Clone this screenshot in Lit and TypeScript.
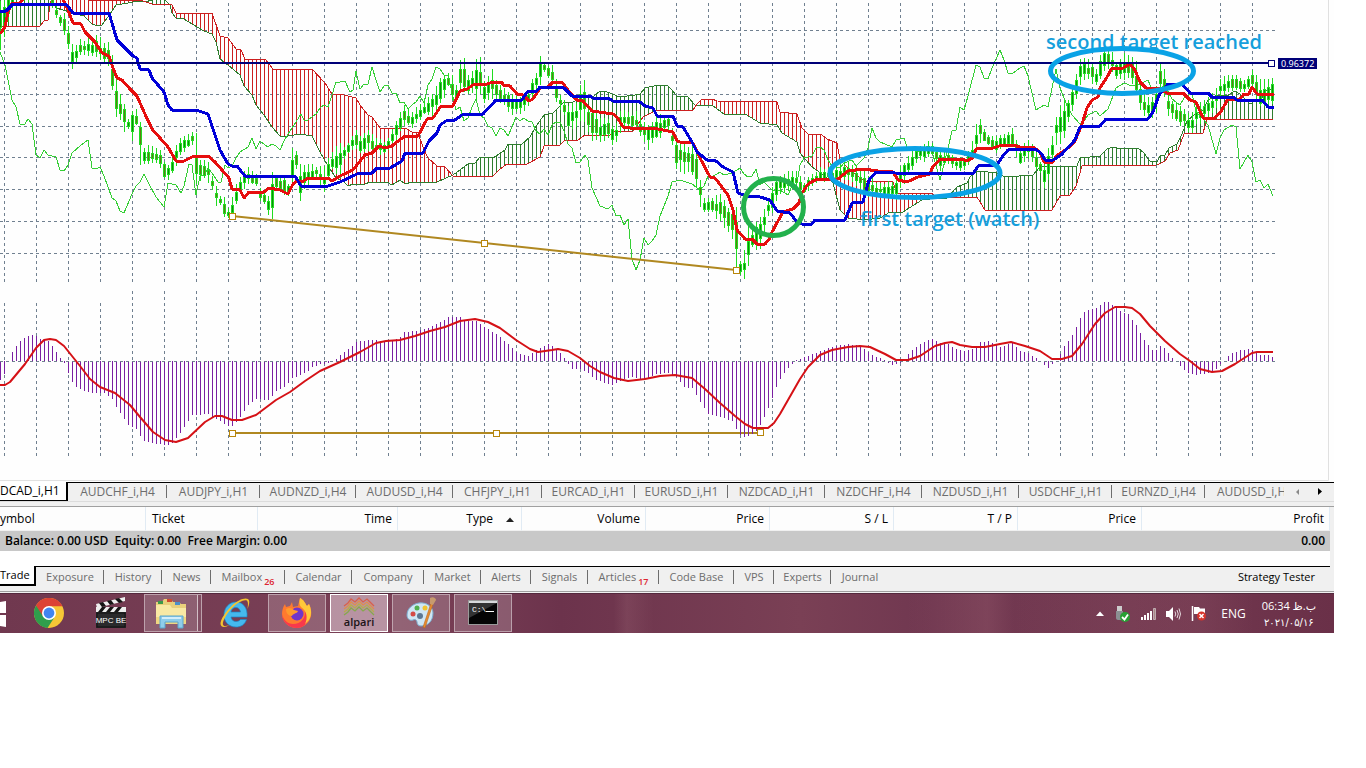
import { LitElement, html, svg, css } from "lit";
import { customElement } from "lit/decorators.js";

type Pt = number[];

const parse = (s: string): Pt[] =>
  s.trim().split(/\s+/).map((p) => p.split(",").map(Number));

const at = (pts: Pt[], x: number, k = 1): number => {
  if (x <= pts[0][0]) return pts[0][k];
  for (let i = 1; i < pts.length; i++) {
    const a = pts[i - 1];
    const b = pts[i];
    if (x <= b[0]) return a[k] + ((b[k] - a[k]) * (x - a[0])) / (b[0] - a[0] || 1);
  }
  return pts[pts.length - 1][k];
};

const TENKAN = `0,34 5,27 8,12 12,3 20,3 25,-3 62,-3 68,10 73,23 81,24 85,32 95,42 102,53 109,56 113,68 117,78 122,80 130,89 137,96 144,112 152,129 160,138 168,147 176,161 184,161 192,157 208,156 215,162 222,170 229,178 232,189 240,190 244,198 249,192 264,192 269,188 280,190 288,194 293,184 297,181 302,182 308,178 328,178 332,181 340,176
353,170 365,155 372,153 379,146 385,148 392,146 397,142 405,136 418,136 427,119 433,118 441,106 453,106 460,91 467,89 473,85 487,84 493,82 502,82 503,85 510,86 517,94 523,95 529,101 533,99 540,88 548,87 553,82 562,82 570,93 577,100 583,101 592,111 613,114 617,117 623,127 630,128 653,128 673,132 677,141
680,142 693,143 700,158 710,177 715,178 722,187 728,195 733,210 737,230 745,239 752,239 757,244 765,244 770,238 772,232 783,212 793,209 799,203 802,193 808,184 817,179 838,179 848,171 863,169 878,171 893,172 898,180 907,182 918,177 930,174 932,168 940,159 963,159 966,161 973,158 976,149 993,148 1002,145 1013,145
1020,147 1033,147 1040,152 1044,162 1053,162 1056,156 1068,148 1075,141 1082,124 1087,108 1092,100 1098,97 1100,88 1107,77 1112,68 1123,68 1130,64 1135,70 1140,82 1146,88 1158,88 1167,93 1183,93 1190,100 1196,102 1203,118 1213,119 1220,113 1228,99 1240,99 1244,94 1249,94 1252,87 1257,94 1274,94`;

const KIJUN = `0,11 6,11 13,4 66,4 73,13 109,13 117,40 133,56 137,58 140,69 149,70 152,78 164,92 168,105 172,110 196,110 208,114 220,150 228,164 232,166 237,166 245,176 295,176 301,186 328,186 340,182 357,174 372,173 377,168 390,168 402,161 405,153 423,153 429,141 437,133 440,125 446,121 455,120 462,115 483,114 496,100 522,100 527,92 537,91 540,87 564,88 572,96 590,96 593,98 608,98 613,101 640,102 645,106 653,108 657,116 673,116 677,126
683,127 692,142 697,152 707,160 716,161 723,167 733,172 738,193 747,196 760,197 770,200 777,211 790,213 797,222 802,224 812,224 815,220 845,220 852,203 863,202 869,180 876,172 895,173 973,174 978,166 997,165 1002,157 1008,150 1035,149 1041,153 1045,160 1053,160 1061,155 1075,140 1080,127 1100,126 1106,119 1148,119 1153,112 1159,95 1168,84 1183,85 1190,93 1208,93 1212,97 1233,97 1237,100 1262,100 1268,107 1274,107`;

const CHIKOU = `0,52 5,65 12,100 16,107 20,124 25,124 28,119 32,124 36,155 40,158 44,150 48,155 56,157 60,170 64,171 68,165 72,153 80,146 88,140 92,168 96,169 100,167 104,176 112,198 116,201 120,211 124,213 132,194 136,186 140,182 144,174 148,182 156,197 164,207 168,183 176,185 181,193 184,186 189,164 192,165 196,195 200,176 204,175 208,168 212,173 218,182 221,182 225,165 228,168 232,166 236,158 240,152 248,147 252,138 256,149 260,141 268,147 272,144 276,146 280,150 284,141 288,134 296,122 301,114 304,120 308,120 316,114 320,108 324,105 328,107 332,95 336,82
340,82 345,81 350,92 353,90 356,71 360,89 364,84 368,84 372,67 376,80 380,92 384,86 388,85 392,93 396,93 400,103 404,102 408,109 412,105 416,102 420,96 424,103 428,85 432,79 436,67 440,69 444,75 448,76 452,92 456,110 460,107 464,121 468,118 472,107 476,99 480,115 484,118 488,126 492,128 496,136 500,128 504,130 508,136 512,127 516,117 520,121 524,118 528,121 532,122 536,131 540,134 544,129 548,135 552,125 556,122 560,122 564,131 568,144 572,148 576,163 580,162 585,155 588,160 592,188 600,206 608,209 612,205 616,216 620,215 624,225 628,219 632,259 636,270 640,260 644,238 648,245 652,241 656,235 660,216 668,196 672,182
680,180 692,184 700,190 704,186 708,176 712,177 720,172 724,175 732,173 740,168 744,174 748,177 752,176 756,169 760,185 764,182 772,190 780,190 788,195 792,186 796,189 800,165 804,158 808,157 812,156 816,148 820,147 824,150 828,160 832,166 840,168 844,163 852,160 856,166 864,158 868,148 872,128 876,138 880,142 892,147 896,140 904,138 908,150 912,150 920,152 928,146 932,152 936,165 940,180 948,148 952,131 956,130 960,107 964,110 968,96 976,65 980,67 984,78 988,79 992,68 1000,50 1004,60 1008,73 1012,74 1020,68
1024,66 1028,76 1036,110 1044,105 1048,107 1052,88 1056,69 1060,88 1068,108 1072,115 1080,124 1084,121 1088,115 1096,111 1100,116 1108,109 1116,88 1124,83 1132,86 1140,84 1148,80 1152,90 1160,90 1164,85 1172,99 1180,105 1184,98 1192,93 1196,112 1204,120 1208,125 1216,154 1220,138 1224,130 1232,125 1236,127 1240,169 1248,155 1252,162 1256,182 1260,180 1264,188 1268,184 1273,196`;

const SPAN_A = `0,-3 50,-3 56,8 84,16 92,24 98,26 102,25 110,14 116,5 128,3 138,1 145,2 155,-1 165,0 170,5 172,13 176,18 184,19 192,24 204,31 212,34 216,42 220,59 228,65 240,75 244,86 252,95 256,105 264,115 272,127 280,136 288,136 300,134 312,136 320,152 328,166 336,178 344,182 348,186 353,184 365,184 370,182 387,182 392,185 400,180 405,184 412,182 437,182 453,175 468,164 475,163 480,157 493,158 505,150 508,144 522,144 530,137 535,128 544,115 553,113 563,103 573,102 582,98 593,97 600,91 607,92 620,97 635,95 640,94 645,88 658,85 667,85 670,88 677,96
688,97 695,105 713,106 724,114 745,114 760,123 777,125 782,133 797,142 800,153 812,167 825,176 833,183 840,210 848,218 865,220 880,218 890,212 903,212 917,203 922,200 930,199 947,198 957,187 967,183 970,177 978,171 997,173 1005,177 1033,175 1040,167 1065,166 1069,167 1077,166 1080,158 1100,156 1107,149 1113,147 1120,149 1138,148 1144,153 1150,161 1157,162 1160,156 1165,155 1169,148 1177,144 1182,134 1187,121 1195,114 1203,110 1208,100 1215,96 1228,95 1235,91 1240,94 1250,104 1255,101 1262,98 1264,92 1273,88`;

const SPAN_B = `0,26 40,26 44,21 48,20 50,5 52,-2 84,-2 88,0 140,0 152,4 172,5 176,13 212,13 220,36 228,38 236,49 241,50 245,59 265,59 273,69 312,69 325,83 332,94 340,94 356,98 360,105 368,115 372,117 380,128 407,129 412,132 418,133 423,147 428,158 437,166 445,167 453,176 493,176 500,169 507,164 527,164 540,157 544,146 560,145 564,141 578,140 585,135 610,135 613,132 633,131 643,117 657,110 680,110
693,110 697,104 702,99 712,99 717,101 777,102 780,112 797,114 802,128 808,134 822,135 827,139 837,143 840,160 848,168 852,172 865,181 893,182 897,193 933,194 935,197 977,197 985,210 1052,210 1060,196 1070,195 1076,186 1082,166 1157,165 1165,161 1170,153 1178,150 1184,134 1203,133 1207,119 1273,119`;

/* x, centre, half range */
const PRICE = `0,20,22 4,14,20 8,6,14 16,-8,8 48,-6,4 52,0,6 56,12,6 60,20,5 64,25,9 68,38,10 72,58,10 76,54,8 80,47,6 88,48,8 96,46,8 104,54,12 108,55,10 112,75,15 116,95,20 120,106,10 124,115,12 128,124,5 132,123,14 136,118,8 140,140,20 144,156,6 148,155,8 156,156,6 160,160,8 164,170,8 168,172,6 172,166,8 176,155,8 180,147,8 188,142,6 192,138,6 196,160,22 200,170,8 208,172,8 212,183,8 216,195,8 220,200,4 224,208,8 228,213,5 232,207,8 236,195,10 240,185,8 248,176,8 256,180,5 260,195,5 264,198,6 268,205,8 272,195,18 276,182,6 284,185,8 288,190,6 292,168,15 296,160,8 300,185,16 304,178,12 308,175,8 316,172,6 324,180,10 328,170,10 332,162,8 340,160,14 344,152,6 348,148,5 356,140,8 360,146,8 368,140,8 376,146,6 384,148,6 388,144,6 392,136,8 396,130,8 400,122,8 404,115,8 412,120,7 416,116,8 424,108,7 428,108,8 436,100,10 440,90,14 448,80,6 452,88,10 456,93,6 460,77,14 464,78,15 468,85,8 476,78,16 480,76,14 484,92,10 492,84,12 496,90,8 504,97,8 512,105,10 520,104,8 528,98,8 532,88,8 536,82,8 540,70,12 544,68,4 552,75,8 556,92,10 560,102,6 564,108,6 568,118,10 576,115,10 580,104,14 584,100,16 588,118,14 592,122,16 600,130,12 608,128,8 614,138,8 620,120,10 628,120,6 636,122,8 644,132,8 648,136,12 652,132,10 660,126,10 668,122,6 672,138,8 676,155,14 680,156,14 688,158,12 696,168,16 700,192,12 704,205,8 712,205,7 720,208,12 728,218,10 732,222,12 736,240,28 740,268,6 744,265,12 748,245,18 752,240,8 760,230,15 764,220,12 768,208,8 772,200,12 776,188,12 784,182,8 796,180,8 804,188,6 812,180,6 820,175,6 832,174,5 850,170,8 860,180,10 870,188,8 885,191,5 896,188,10 900,178,10 908,165,10 916,155,6 924,152,8 932,150,6 940,160,8 948,158,6 956,164,6 964,164,5 972,152,8 976,138,11 980,130,10 988,140,4 996,145,7 1004,140,6 1012,138,8 1020,156,8 1028,148,8 1036,160,8 1040,168,6 1044,175,10 1048,165,14 1052,148,14 1056,130,12 1064,120,16 1068,110,10 1072,98,10 1076,85,12 1080,70,12 1088,70,10 1096,76,8 1104,60,12 1110,60,8 1116,70,8 1130,66,12 1138,85,15 1142,104,12 1150,108,8 1156,100,12 1160,76,12 1164,85,14 1168,105,10 1176,113,8 1184,118,8 1190,125,8 1196,115,8 1208,108,8 1216,98,8 1220,88,8 1232,83,8 1244,85,5 1252,80,8 1260,95,12 1272,92,12`;

const MACD = `0,380 4,374 8,362 12,352 16,346 20,341 24,338 28,336 32,335 36,336 40,339 44,340 48,341 52,346 56,352 60,358 64,363 68,373 72,382 76,387 84,391 92,393 104,393 112,399 116,407 120,413 128,425 136,429 140,436 144,441 156,444 168,445 172,443 176,438 184,427 192,415 208,414 216,419 220,421 228,426 232,426 236,422 244,411 248,405 256,399 268,400 276,391 284,387 292,378 300,375 308,371 312,367 320,364 328,363 332,361 336,359 340,355 348,349 352,346 356,342 368,340 392,341 400,337 404,332 416,331 428,328 440,322 448,317 460,317 464,321 476,321 484,327 496,334 508,344 516,352 520,354 528,356 536,350 540,348 548,344 552,346 560,353 564,358 568,364 572,369 580,369 588,373 596,380 612,385 616,383 624,379 632,377 644,380 652,376 656,374 668,373 676,377 684,387 692,388 700,402 704,408 708,414 720,417 732,421 736,429 742,438 748,436 756,431 760,425 764,417 768,408 772,398 776,387 780,379 784,373 788,368 796,360 808,356 820,351 828,348 840,345 848,344 856,345 864,349 872,355 880,358 884,360 892,365 900,363 904,359 908,354 912,350 920,344 928,340 932,339 940,343 948,344 956,349 964,351 972,349 980,342 988,341 996,345 1000,347 1012,343 1020,351 1028,353 1036,358 1044,365 1048,368 1052,364 1056,361 1060,354 1064,346 1072,335 1076,327 1080,318 1084,312 1088,310 1096,308 1104,302 1108,302 1112,305 1120,311 1128,314 1136,325 1144,340 1152,350 1156,350 1160,346 1164,348 1172,358 1180,366 1188,373 1196,375 1208,373 1216,369 1220,364 1224,361 1228,356 1232,353 1240,350 1248,349 1252,350 1260,355 1268,355 1272,357`;

const SIGNAL = `0,385 5,385 10,382 25,364 36,348 44,340 50,339 56,340 64,346 72,356 80,366 90,379 100,387 115,393 130,405 140,417 153,432 165,440 176,442 188,438 205,422 215,416 222,416 232,420 242,420 256,415 276,400 290,392 305,381 320,371 340,362 360,352 376,343 386,341 400,340 415,336 430,331 445,327 460,321 475,319 488,322 500,328 516,340 530,349 538,352 552,350 558,349 568,351 580,358 590,366 600,372 614,378 628,381 645,379 660,376 675,375 692,378 705,389 720,403 735,416 745,424 753,428 768,428 774,423 780,414 788,400 800,379 808,367 820,355 832,350 848,347 860,346 870,347 885,354 896,360 908,360 920,356 935,346 945,343 952,342 960,345 972,347 985,347 1000,344 1011,342 1025,346 1040,351 1052,359 1062,359 1072,356 1082,344 1095,324 1105,313 1115,307 1125,307 1132,308 1140,314 1150,326 1165,341 1180,354 1190,361 1200,369 1212,372 1222,371 1235,364 1252,353 1257,352 1273,352`;

const gridPath = (): string => {
  let d = "";
  for (let x = 4; x < 1270; x += 32) {
    d += `M${x}.5 3V283M${x}.5 ${x < 110 ? 303 : 291}V457`;
  }
  for (const y of [30, 94, 126, 157, 189, 221, 253]) d += `M0 ${y}.5H1275`;
  return d;
};

const cloudPaths = (): { up: string; down: string } => {
  const a = parse(SPAN_A);
  const b = parse(SPAN_B);
  let up = "";
  let down = "";
  for (let x = 0; x <= 1272; x += 4) {
    const ya = Math.round(at(a, x));
    const yb = Math.round(at(b, x));
    if (Math.abs(ya - yb) < 2) continue;
    if (ya < yb) up += `M${x}.5 ${ya}V${yb}`;
    else down += `M${x}.5 ${yb}V${ya}`;
  }
  return { up, down };
};

const candlePaths = () => {
  const p = parse(PRICE);
  let wick = "";
  let body = "";
  let bull = "";
  let bear = "";
  let seed = 7;
  const rnd = () => {
    seed = (seed * 16807) % 2147483647;
    return seed / 2147483647;
  };
  for (let x = 0; x <= 1272; x += 4) {
    const c = at(p, x);
    const h = at(p, x, 2);
    const hi = Math.round(c - h * (0.85 + rnd() * 0.55));
    const lo = Math.round(c + h * (0.85 + rnd() * 0.55));
    const t = Math.round(c - h * (0.2 + rnd() * 0.5));
    const b = Math.round(c + h * (0.2 + rnd() * 0.5)) + 1;
    const falling = at(p, x + 4) > c;
    wick += `M${x}.5 ${hi}V${lo}`;
    body += `M${x}.5 ${t}V${b}`;
    if (falling) bear += `M${x}.5 ${t + 1}V${b - 1}`;
    else bull += `M${x}.5 ${t + 1}V${b - 1}`;
  }
  return { wick, body, bull, bear };
};

const macdPath = (): string => {
  const m = parse(MACD);
  let d = "";
  for (let x = 0; x <= 1272; x += 4) {
    d += `M${x}.5 361V${Math.round(at(m, x))}`;
  }
  return d;
};

const handle = (x: number, y: number, color = "#b8860b") =>
  svg`<rect x=${x - 2.5} y=${y - 2.5} width="6" height="6" fill="#fff" stroke=${color} stroke-width="1"></rect>`;

@customElement("price-chart")
export class PriceChart extends LitElement {
  static styles = css`
    :host { display: block; background: #fefefe; }
    .plot { display: block; width: 100%; height: auto; }
    .note { font: 600 20px "Open Sans", "Noto Sans", sans-serif; fill: #159fdc; }
    .tag { font: 9px "Noto Sans", sans-serif; fill: #fff; }
  `;
  render() {
    const cloud = cloudPaths();
    const candle = candlePaths();
    return html`
      <svg class="plot" viewBox="0 0 1334 482" role="img" aria-label="Price chart">
        <defs><clipPath id="cap"><rect x="1030" y="28" width="260" height="22"></rect></clipPath></defs>
        <g fill="none">
          <path d=${gridPath()} stroke="#708090" stroke-dasharray="3 3" shape-rendering="crispEdges"></path>
          <g shape-rendering="crispEdges">
            <path d=${cloud.up} stroke="#2e7d2e"></path>
            <path d=${cloud.down} stroke="#cc1f1f"></path>
            <polyline points=${SPAN_A} stroke="#2e7d2e"></polyline>
            <polyline points=${SPAN_B} stroke="#cc1f1f"></polyline>
            <polyline points=${CHIKOU} stroke="#35cf35"></polyline>
            <path d=${candle.wick} stroke="#1fdc1f"></path>
            <path d=${candle.body} stroke="#1fdc1f" stroke-width="3"></path>
            <path d=${candle.bull} stroke="#0a8f0a"></path>
            <path d=${candle.bear} stroke="#5f7a14"></path>
            <polyline points=${TENKAN} stroke="#e60e0e" stroke-width="3" stroke-linejoin="round"></polyline>
            <polyline points=${KIJUN} stroke="#0000d8" stroke-width="3" stroke-linejoin="round"></polyline>
          </g>
          <path d="M0 63H1269" stroke="#000078" stroke-width="2"></path>
          <path d="M232 216L736 270M232 433H760" stroke="#b08820" stroke-width="2"></path>
          <path d=${macdPath()} stroke="#7a1fa2" shape-rendering="crispEdges"></path>
          <path d="M0 361.5H1278" stroke="#708090" stroke-dasharray="3 3" shape-rendering="crispEdges"></path>
          <polyline points=${SIGNAL} stroke="#d51116" stroke-width="2" stroke-linejoin="round"></polyline>
        </g>
        ${handle(232, 216)}${handle(484, 243)}${handle(736, 270)}
        ${handle(232, 433)}${handle(496, 433)}${handle(760, 432)}
        ${handle(1271, 63, "#000078")}
        <rect x="1278" y="58" width="39" height="11" fill="#000078"></rect>
        <text class="tag" x="1281" y="67">0.96372</text>
        <text class="note" x="1046" y="49" clip-path="url(#cap)">second target reached</text>
        <text class="note" x="860" y="226">first target (watch)</text>
        <g fill="none" stroke-width="5">
          <ellipse cx="773.5" cy="207" rx="30" ry="28.5" stroke="#22b14c"></ellipse>
          <ellipse cx="915" cy="173" rx="85" ry="24.5" stroke="#0aa2e6"></ellipse>
          <ellipse cx="1122" cy="71" rx="71.5" ry="22.5" stroke="#0aa2e6"></ellipse>
        </g>
        <path d="M1328.5 0V480.5H0" fill="none" stroke="#e0e0e0"></path>
      </svg>
    `;
  }
}

@customElement("symbol-tabs")
export class SymbolTabs extends LitElement {
  static styles = css`
    :host { display: block; background: #f0f0f0; border-bottom: 1px solid #a0a0a0; padding-bottom: 4px; }
    .strip {
      display: grid; height: 19px; border-bottom: 1px solid #dcdcdc;
      grid-template-columns: 68fr 99fr 93fr 96fr 97fr 89fr 93fr 93fr 97fr 97fr 97fr 93fr 93fr 79fr 50fr;
    }
    .tab {
      border: 0; background: none; margin: 0; padding: 0; min-width: 0; overflow: hidden; white-space: nowrap;
      font: 12px/18px "Open Sans", "Noto Sans", sans-serif; color: #6d6d6d; border-top: 1px solid #000;
      display: flex; align-items: center; justify-content: center;
    }
    .tab.on { border: 0; border-right: 2px solid #000; border-bottom: 1px solid #000; background: #fff; color: #000; justify-content: flex-start; }
    .tab.split { background: linear-gradient(#6d6d6d, #6d6d6d) no-repeat right 2px / 1px 13px; }
    .tab.cut { justify-content: flex-start; padding-left: 12px; }
    .nav { border-top: 1px solid #000; display: flex; align-items: center; gap: 15px; padding-left: 10px; }
    .arrow { border: 0; background: none; padding: 0; width: 7px; height: 10px; display: flex; }
  `;
  private names = ["AUDCHF_i,H4", "AUDJPY_i,H1", "AUDNZD_i,H4", "AUDUSD_i,H4", "CHFJPY_i,H1", "EURCAD_i,H1", "EURUSD_i,H1", "NZDCAD_i,H1", "NZDCHF_i,H4", "NZDUSD_i,H1", "USDCHF_i,H1", "EURNZD_i,H4"];
  render() {
    return html`<div class="strip">
      <button class="tab on">DCAD_i,H1</button>
      ${this.names.map((n) => html`<button class="tab split">${n}</button>`)}
      <button class="tab cut">AUDUSD_i,H4</button>
      <div class="nav">
        <button class="arrow" aria-label="Scroll left"><svg width="7" height="10" viewBox="0 0 7 10"><path d="M5 2v6L2 5z" fill="#8a8a8a"></path></svg></button>
        <button class="arrow" aria-label="Scroll right"><svg width="7" height="10" viewBox="0 0 7 10"><path d="M2 1v7l4-3.5z" fill="#000"></path></svg></button>
      </div>
    </div>`;
  }
}

@customElement("trade-terminal")
export class TradeTerminal extends LitElement {
  static styles = css`
    :host { display: block; background: #f0f0f0; padding-right: 4px; border-bottom: 1px solid #a0a0a0; font: 11px/18px "Open Sans", "Noto Sans", sans-serif; }
    .orders { width: 100%; border-collapse: separate; border-spacing: 0; table-layout: fixed; background: #fdfdfd; font-size: 12px; }
    .orders th { height: 24px; box-sizing: border-box; padding: 0 5px; font-weight: 400; text-align: right; border-right: 1px solid #e1ebf4; border-bottom: 1px solid #f0f0f0; white-space: nowrap; }
    .orders th.left { text-align: left; padding-left: 6px; }
    .orders th.edge { padding-left: 0; }
    .orders th.type { padding-right: 6px; }
    .orders td { height: 20px; padding: 0 5px; background: #c8c8c8; font-weight: 600; white-space: pre; }
    .orders td.sum { text-align: right; }
    .sort { margin-left: 12px; vertical-align: 1px; }
    .rest { height: 15px; background: #fff; }
    .tabs {
      display: grid; height: 25px;
      grid-template-columns: 36fr 68fr 58fr 49fr 74fr 67fr 72fr 57fr 50fr 57fr 71fr 75fr 40fr 57fr 58fr 441fr;
    }
    .tab {
      border: 0; border-top: 1px solid #000; background: none; margin: 0; padding: 0 0 4px; min-width: 0; white-space: nowrap;
      font: inherit; color: #6d6d6d; display: flex; align-items: center; justify-content: center;
    }
    .tab.split { background: linear-gradient(#6d6d6d, #6d6d6d) no-repeat right 3px / 1px 14px; }
    .tab.on { border-top: 0; border-right: 2px solid #000; border-bottom: 2px solid #000; background: #fff; color: #000; height: 20px; box-sizing: border-box; padding: 0; justify-content: flex-start; }
    .tab.tester { color: #000; justify-content: flex-end; padding-right: 15px; }
    .count { font-size: 9px; line-height: 10px; font-weight: 600; color: #dd2430; margin-left: 2px; align-self: flex-end; }
  `;
  private tabs: [string, string?][] = [["Exposure"], ["History"], ["News"], ["Mailbox", "26"], ["Calendar"], ["Company"], ["Market"], ["Alerts"], ["Signals"], ["Articles", "17"], ["Code Base"], ["VPS"], ["Experts"]];
  render() {
    return html`
      <table class="orders">
        <colgroup>
          ${[146, 112, 140, 124, 124, 124, 124, 124, 124, 188].map((w) => html`<col style="width:${(w / 13.3).toFixed(3)}%" />`)}
        </colgroup>
        <thead>
          <tr>
            <th class="left edge">ymbol</th><th class="left">Ticket</th><th>Time</th>
            <th class="type">Type<svg class="sort" width="10" height="5" viewBox="0 0 10 5"><path d="M1 5L5 0.5 9 5z" fill="#222"></path></svg></th>
            <th>Volume</th><th>Price</th><th>S / L</th><th>T / P</th><th>Price</th><th>Profit</th>
          </tr>
        </thead>
        <tbody>
          <tr><td colspan="9">Balance: 0.00 USD  Equity: 0.00  Free Margin: 0.00</td><td class="sum">0.00</td></tr>
        </tbody>
      </table>
      <div class="rest"></div>
      <div class="tabs">
        <button class="tab on">Trade</button>
        ${this.tabs.map(([n, c]) => html`<button class="tab split">${n}${c ? html`<span class="count">${c}</span>` : ""}</button>`)}
        <button class="tab">Journal</button>
        <button class="tab tester">Strategy Tester</button>
      </div>
    `;
  }
}

const chrome = svg`<svg width="30" height="30" viewBox="0 0 30 30">
  <circle cx="15" cy="15" r="15" fill="#f6c736"></circle>
  <path d="M15 15L2 7.5A15 15 0 0 0 13.5 30L20 20z" fill="#2f9e4c"></path>
  <path d="M2 7.5A15 15 0 0 1 28.500 8.3H15L8.8 18z" fill="#dc4335"></path>
  <circle cx="15" cy="15" r="7" fill="#fff"></circle><circle cx="15" cy="15" r="5.4" fill="#4285f0"></circle></svg>`;

const clapper = svg`<svg width="32" height="32" viewBox="0 0 32 32">
  <path d="M1 7L30 0v4L2 11z" fill="#eee"></path><path d="M4 6l4-1 3 4-4 1zM12 4l4-1 3 4-4 1zM20 2l4-1 4 4-4 1z" fill="#151515"></path>
  <rect x="1" y="10" width="30" height="5" fill="#eee"></rect><path d="M3 15l4-5h4l-4 5zM11 15l4-5h4l-4 5zM19 15l4-5h4l-4 5z" fill="#151515"></path>
  <rect x="1" y="15" width="30" height="16" fill="#2a2a2c"></rect><rect x="2" y="16" width="28" height="14" fill="none" stroke="#111"></rect>
  <text x="16" y="26" text-anchor="middle" font-family="Liberation Sans, sans-serif" font-size="8" fill="#fff">MPC BE</text></svg>`;

const folder = svg`<svg width="34" height="32" viewBox="0 0 34 32">
  <path d="M2 5h6l2-3h7l2 3h6l2 2h5v19H2z" fill="#e9d07c"></path><path d="M4 4h5v3H4z" fill="#3c9a4a"></path><path d="M13 2h5v3h-5z" fill="#cf4a2e"></path><path d="M21 5h5v3h-5z" fill="#4c8fc9"></path>
  <path d="M2 8h14l2 3h14v16H2z" fill="#f8e9a4"></path><path d="M2 20h30v7H2z" fill="#efd681"></path>
  <path d="M6 19h23v12h-5v-6H11v6H6z" fill="#8fcdea" stroke="#5aa6cd"></path><path d="M8 20h19v2H8z" fill="#d2eefb"></path></svg>`;

const explorer = svg`<svg width="32" height="32" viewBox="0 0 32 32">
  <path d="M28 20H12c.5 3 2.500 4.500 5 4.500 2 0 3.500-.8 4.500-2h6C26 27.500 22 30 17 30 10 30 5 25 5 18S10 5 17 5C24 5 29 11 28 20zM12 15h9.500c-.5-3-2.300-4.500-4.700-4.500S12.500 12 12 15z" fill="#45b9ee" stroke="#1c85c6" stroke-width=".7"></path>
  <path d="M28.500 12c2-5 2.500-8.500.5-10-3-2-10.500 1-16 6.500S1 22.500 1.500 27c.5 4 5 3.500 9 1-4 1.500-6.300 1.500-6.600-.7C3.400 24 8 16 13.500 10.500S25.500 2 27.800 3.600c1.400 1 1.400 4.500.7 8.400z" fill="#f4c430"></path></svg>`;

const firefox = svg`<svg width="32" height="32" viewBox="0 0 32 32">
  <path d="M4 7l1 3 4-1 2-4 1 5 5-1 2-8c4 2 5 5 7 8l2-2c3 6 3 12 0 17-3 4-7 7-12 7C8 31 1 25 1 17c0-4 1-7 3-10z" fill="#ff7a2f"></path>
  <path d="M1 17c1 6 6 10 11 10 8 0 13-6 12-14l5 4c-1 8-6 14-13 14C8 31 1 25 1 17z" fill="#f8394c"></path>
  <path d="M19 1c4 2 5 5 7 8l2-2c4 8 2 16-4 20 3-6 2-13-4-17-2-2-2-5-1-9z" fill="#ffc83a"></path>
  <circle cx="16" cy="17" r="6.5" fill="#7135c9"></circle><path d="M5 12c3-2 6-1 8 1l4 1c-1 3-5 2-6 5-4 0-6-3-6-7z" fill="#ff9a2d"></path></svg>`;

const alpari = svg`<svg width="40" height="34" viewBox="0 0 40 34">
  <g fill="none" stroke-width="1.3"><path d="M5 10l4-3 3-4 4 3 4-4 4 4 4-3 3 3 4 4" stroke="#d8614c"></path><path d="M5 13l4-3 3-4 4 3 4-4 4 4 4-3 3 3 4 4" stroke="#e08e4c"></path><path d="M5 16l4-3 3-4 4 3 4-4 4 4 4-3 3 3 4 4" stroke="#b6ae48"></path><path d="M5 19l4-3 3-4 4 3 4-4 4 4 4-3 3 3 4 4" stroke="#86a84e"></path></g>
  <text x="20" y="30" text-anchor="middle" font-family="Open Sans, sans-serif" font-weight="600" font-size="11" fill="#1a1216">alpari</text></svg>`;

const paint = svg`<svg width="32" height="32" viewBox="0 0 32 32">
  <path d="M14 6c8-1 14 4 14 10 0 8-5 13-12 13-3 0-4-2-4-4s-2-3-4-2c-3 1-6-1-6-5C2 12 7 7 14 6z" fill="#cfe6f4" stroke="#7aaed0"></path>
  <circle cx="8" cy="17" r="2.5" fill="#d44a46"></circle><circle cx="12" cy="11" r="2.5" fill="#52b050"></circle><circle cx="20" cy="11" r="2.5" fill="#f0c330"></circle><circle cx="15" cy="19" r="3" fill="#5c7894"></circle>
  <path d="M26 6l2 1-8 24-2-1z" fill="#e68a2e" stroke="#b5651d" stroke-width=".5"></path><path d="M25 1c3-2 6 0 6 2l-3 5-3-1z" fill="#c79a6e"></path></svg>`;

const consoleIcon = svg`<svg width="30" height="26" viewBox="0 0 30 26">
  <rect x=".5" y=".5" width="29" height="24" fill="#050505" stroke="#9a9a9a"></rect><rect x="1" y="1" width="28" height="2" fill="#d8dadc"></rect>
  <path d="M1 3h28L1 18z" fill="#333"></path><text x="4" y="12" font-family="Liberation Mono, monospace" font-size="8" fill="#fff">C:\\</text><path d="M18 11.5h8" stroke="#fff"></path></svg>`;

@customElement("task-bar")
export class TaskBar extends LitElement {
  static styles = css`
    :host {
      display: flex; align-items: stretch; height: 40px; box-sizing: border-box; border-top: 1px solid #54283d;
      font: 12px/18px "Open Sans", "Noto Sans", "DejaVu Sans", sans-serif; color: #fff;
      background:
        linear-gradient(90deg, transparent 0 46%, rgba(150, 95, 112, 0.3) 47%, transparent 49%, transparent 68%, rgba(150, 90, 108, 0.35) 74%, transparent 76%, rgba(150, 90, 108, 0.2) 90%, transparent 94%),
        linear-gradient(90deg, #70384f, #7b4157 30%, #6c334c 42%, #7a4055 60%, #703750 70%, #743a51 85%, #6a3048);
    }
    .app, .start { border: 0; background: none; margin: 0; padding: 0; display: flex; align-items: center; justify-content: center; }
    .start { width: 20px; justify-content: flex-start; }
    .apps { display: flex; gap: 4px; padding-bottom: 1px; flex: 1; }
    .app { width: 58px; box-sizing: border-box; border: 1px solid transparent; }
    .app.open { background: rgba(255, 255, 255, 0.18); border-color: rgba(255, 255, 255, 0.42); }
    .app.active { background: rgba(235, 215, 225, 0.55); border-color: #fff; }
    .app.stack { box-shadow: inset -4px 0 0 -1px rgba(120, 65, 88, 0.9), inset -5px 0 0 -1px rgba(255, 255, 255, 0.6); padding-right: 4px; }
    .tray { display: flex; align-items: center; gap: 10px; }
    .lang { margin-left: 5px; }
    .clock { text-align: center; font-size: 11px; line-height: 17px; margin: 0 18px 0 6px; }
    .day { font-family: "DejaVu Sans", sans-serif; font-size: 10px; }
  `;
  render() {
    return html`
      <button class="start" aria-label="Start"><svg width="6" height="28" viewBox="0 0 6 28"><path d="M0 2l6-1v12H0zM0 15h6v12l-6-1z" fill="#fff"></path></svg></button>
      <div class="apps">
        <button class="app" aria-label="Chrome">${chrome}</button>
        <button class="app" aria-label="Media player">${clapper}</button>
        <button class="app open stack" aria-label="Files">${folder}</button>
        <button class="app" aria-label="Internet Explorer">${explorer}</button>
        <button class="app open" aria-label="Firefox">${firefox}</button>
        <button class="app active" aria-label="Alpari terminal">${alpari}</button>
        <button class="app open" aria-label="Paint">${paint}</button>
        <button class="app open" aria-label="Command prompt">${consoleIcon}</button>
      </div>
      <div class="tray">
        <svg width="8" height="5" viewBox="0 0 8 5"><path d="M0 5l4-4.5L8 5z" fill="#fff"></path></svg>
        <svg width="17" height="18" viewBox="0 0 17 18"><path d="M3 1h5v5H3z" fill="#ccc"></path><path d="M2 6h7v9H4c-1 0-2-1-2-2z" fill="#8b8f92"></path><circle cx="11" cy="12" r="5" fill="#27a034"></circle><path d="M8 12l2.500 2.500L14 9.500" fill="none" stroke="#fff" stroke-width="1.8"></path></svg>
        <svg width="15" height="12" viewBox="0 0 15 12"><path d="M0 9h2v3H0zM3 7h2v5H3zM6 5h2v7H6zM9 3h2v9H9z" fill="#fff"></path><path d="M12.500.5h2v11h-2z" fill="#a88" stroke="#ddd" stroke-width=".6"></path></svg>
        <svg width="15" height="14" viewBox="0 0 15 14"><path d="M0 4h3l4-4v14l-4-4H0z" fill="#fff"></path><path d="M9 4.500q1.500 2.500 0 5M11 3q2.500 4 0 8M13 1.500q3 5.500 0 11" fill="none" stroke="#fff" stroke-width=".8"></path></svg>
        <svg width="15" height="15" viewBox="0 0 15 15"><path d="M1.500 0v15" stroke="#fff" stroke-width="1.5"></path><path d="M3 1h5l1 1.500h5V9H9L8 8H3z" fill="#fff"></path><circle cx="10.5" cy="10" r="4.5" fill="#d8342c"></circle><path d="M8.500 8l4 4m0-4l-4 4" stroke="#fff" stroke-width="1.5"></path></svg>
        <span class="lang">ENG</span>
        <div class="clock"><div>06:34 ب.ظ</div><div class="day">۲۰۲۱/۰۵/۱۶</div></div>
      </div>
    `;
  }
}

@customElement("app-root")
export class AppRoot extends LitElement {
  static styles = css`
    :host { display: block; min-height: 100vh; background: #fff; }
    .desktop { display: flex; flex-direction: column; margin-right: 32px; overflow: hidden; }
    .gap { height: 1px; background: #f0f0f0; }
  `;
  render() {
    return html`
      <main class="desktop">
        <price-chart></price-chart>
        <symbol-tabs></symbol-tabs>
        <trade-terminal></trade-terminal>
        <div class="gap"></div>
        <task-bar></task-bar>
      </main>
    `;
  }
}
